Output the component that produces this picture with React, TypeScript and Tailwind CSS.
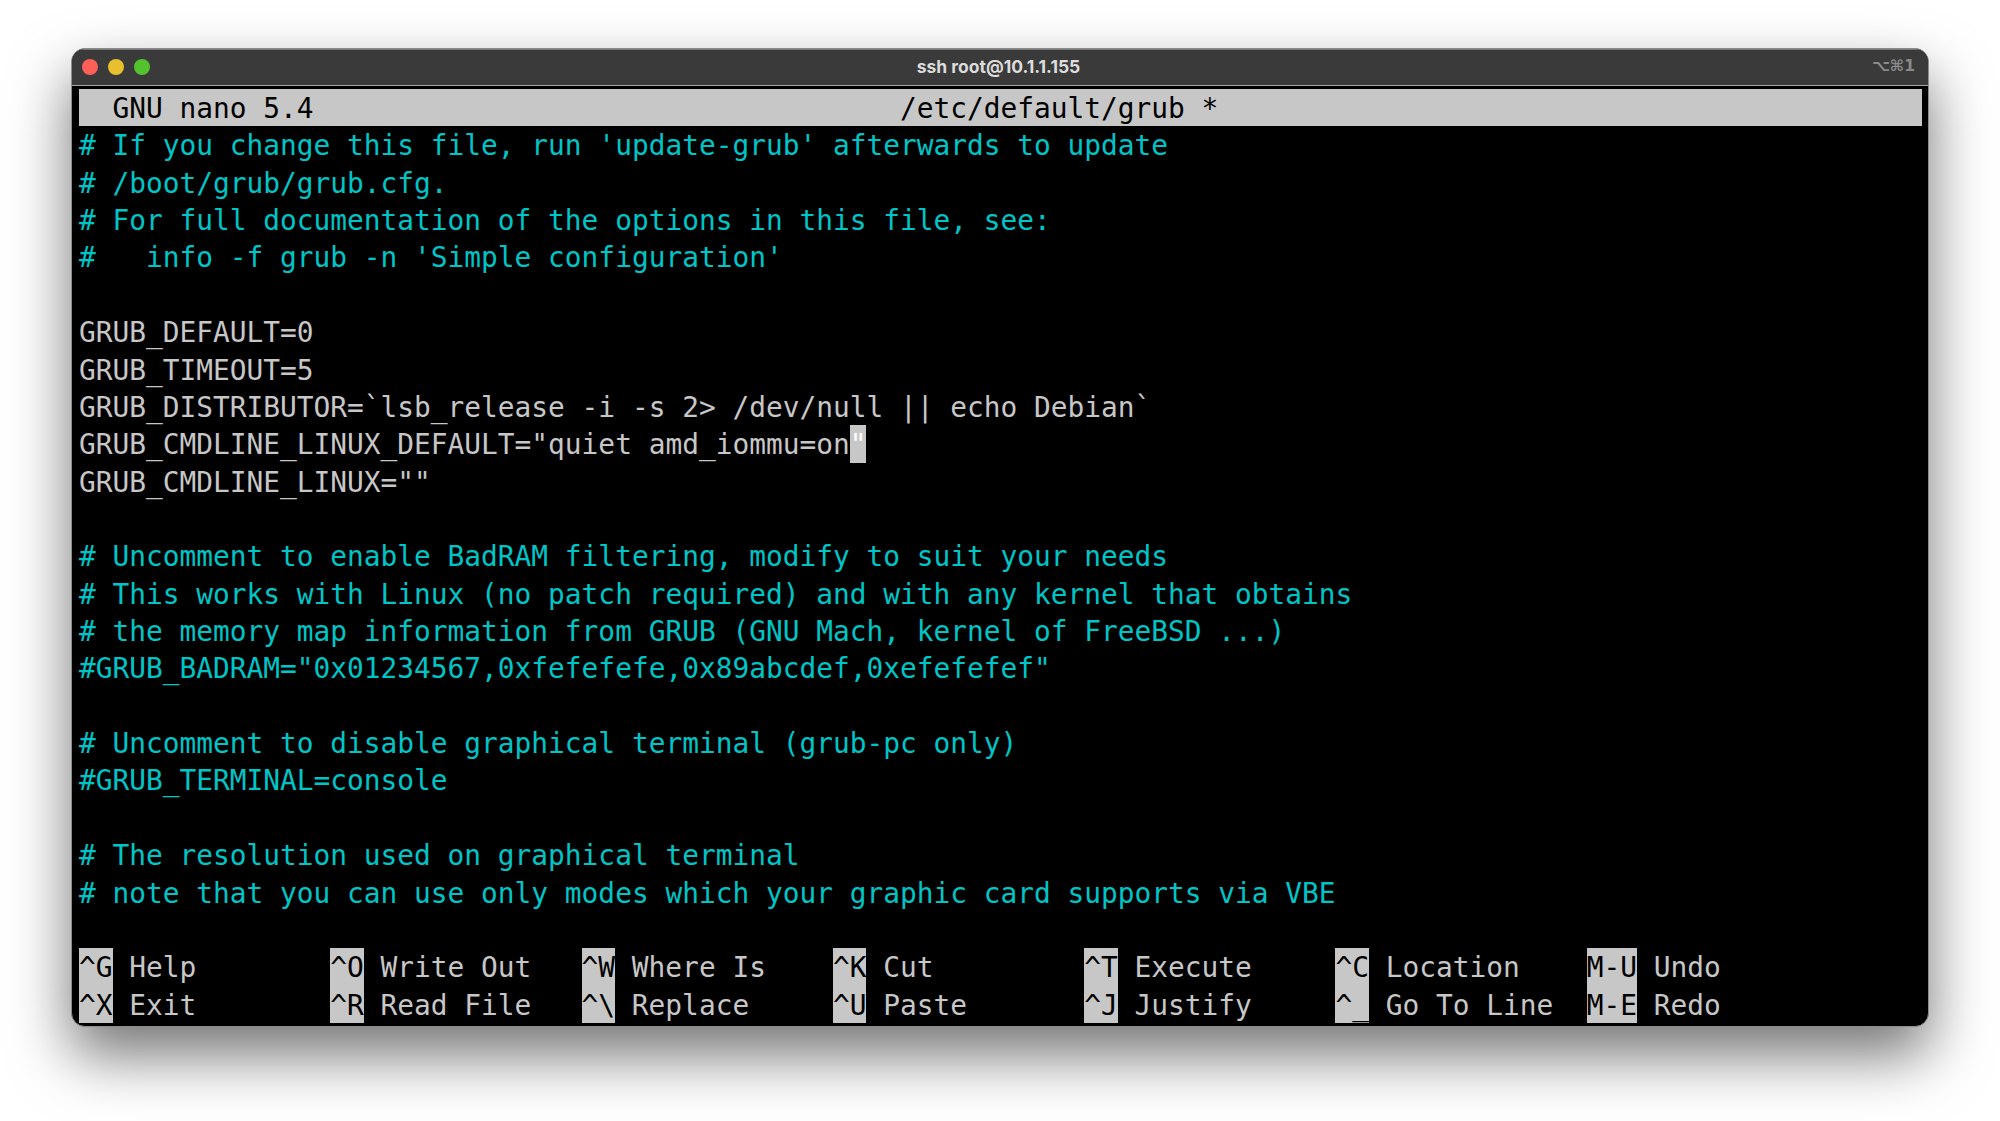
const comment = 'text-[#00c5c7]';
const plain = 'text-[#c7c7c7]';

const lines: [string, string][] = [
    ["# If you change this file, run 'update-grub' afterwards to update", comment],
    ['# /boot/grub/grub.cfg.', comment],
    ['# For full documentation of the options in this file, see:', comment],
    ["#   info -f grub -n 'Simple configuration'", comment],
    ['', plain],
    ['GRUB_DEFAULT=0', plain],
    ['GRUB_TIMEOUT=5', plain],
    ['GRUB_DISTRIBUTOR=`lsb_release -i -s 2> /dev/null || echo Debian`', plain],
    ['CURSOR', plain],
    ['GRUB_CMDLINE_LINUX=""', plain],
    ['', plain],
    ['# Uncomment to enable BadRAM filtering, modify to suit your needs', comment],
    ['# This works with Linux (no patch required) and with any kernel that obtains', comment],
    ['# the memory map information from GRUB (GNU Mach, kernel of FreeBSD ...)', comment],
    ['#GRUB_BADRAM="0x01234567,0xfefefefe,0x89abcdef,0xefefefef"', comment],
    ['', plain],
    ['# Uncomment to disable graphical terminal (grub-pc only)', comment],
    ['#GRUB_TERMINAL=console', comment],
    ['', plain],
    ['# The resolution used on graphical terminal', comment],
    ['# note that you can use only modes which your graphic card supports via VBE', comment],
    ['', plain],
];

const topKeys = [
    ['^G', 'Help'],
    ['^O', 'Write Out'],
    ['^W', 'Where Is'],
    ['^K', 'Cut'],
    ['^T', 'Execute'],
    ['^C', 'Location'],
    ['M-U', 'Undo'],
];

const bottomKeys = [
    ['^X', 'Exit'],
    ['^R', 'Read File'],
    ['^\\', 'Replace'],
    ['^U', 'Paste'],
    ['^J', 'Justify'],
    ['^_', 'Go To Line'],
    ['M-E', 'Redo'],
];

function KeyRow({ items }: { items: string[][] }) {
    return (
        <div className="flex h-[37.37px]">
            {items.map(([key, label]) => (
                <div key={key} className="flex w-[251.3px] h-full">
                    <span className="h-full bg-[#c7c7c7] text-black">{key}</span>
                    <span className={`${plain} ml-[16.76px]`}>{label}</span>
                </div>
            ))}
        </div>
    );
}

export default function App() {
    return (
        <div className="min-h-[1121px] bg-white pt-[48px] px-[71px]">
            <div className="h-[979px] rounded-[14px] border border-[#8c8c8c] bg-black overflow-hidden shadow-[0_28px_60px_rgba(0,0,0,0.55)]">
                <div className="grid grid-cols-3 items-center h-[37px] bg-[#3a3a3a] border-b border-[#a8a8a8] pl-[10px] pr-[13px] shadow-[inset_0_1px_0_#777]">
                    <div className="flex gap-[10px]">
                        <span className="w-[16px] h-[16px] rounded-full bg-[#fe5f57]" />
                        <span className="w-[16px] h-[16px] rounded-full bg-[#e8bf2c]" />
                        <span className="w-[16px] h-[16px] rounded-full bg-[#54c22f]" />
                    </div>
                    <div className="text-center text-[17.5px] font-bold text-[#dcdcdc] font-['Inter',sans-serif]">
                        ssh root@10.1.1.155
                    </div>
                    <div className="text-right text-[15.5px] font-bold text-[#8a8a8a] font-['DejaVu_Sans',sans-serif]">
                        ⌥⌘1
                    </div>
                </div>
                <div className="pt-[3px] pl-[7px] pr-[6px] font-['DejaVu_Sans_Mono',monospace] text-[27.84px] leading-[39.37px] whitespace-pre">
                    <div className="h-[37.37px] bg-[#c7c7c7] text-black">
                        {'  GNU nano 5.4                                   /etc/default/grub *'}
                    </div>
                    {lines.map(([text, color], i) => (
                        <div key={i} className={`h-[37.37px] ${color}`}>
                            {text === 'CURSOR' ? (
                                <>
                                    GRUB_CMDLINE_LINUX_DEFAULT="quiet amd_iommu=on
                                    <span className="inline-block h-[37.37px] align-top bg-[#c7c7c7] text-white">"</span>
                                </>
                            ) : (
                                text
                            )}
                        </div>
                    ))}
                    <KeyRow items={topKeys} />
                    <KeyRow items={bottomKeys} />
                </div>
            </div>
        </div>
    );
}
